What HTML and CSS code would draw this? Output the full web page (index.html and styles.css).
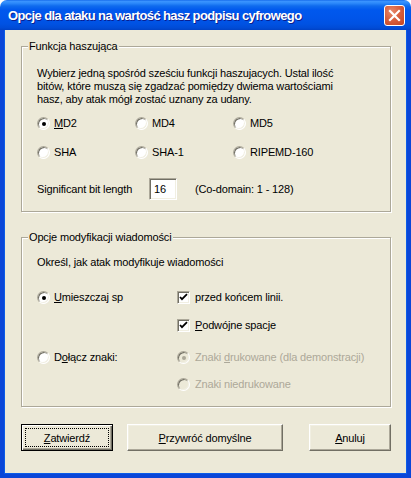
FILE: index.html
```html
<!DOCTYPE html>
<html lang="pl">
<head>
<meta charset="utf-8">
<title>Opcje dla ataku na wartość hasz podpisu cyfrowego</title>
<link rel="stylesheet" href="styles.css">
</head>
<body>
<div class="window">
  <div class="titlebar">
    <span class="title">Opcje dla ataku na wartość hasz podpisu cyfrowego</span>
    <span class="close"><svg width="21" height="21" viewBox="0 0 21 21"><path d="M6 6 L15 15 M15 6 L6 15" stroke="#fff" stroke-width="2.2" stroke-linecap="square"/></svg></span>
  </div>
  <div class="client">
    <fieldset class="group g1">
      <legend>Funkcja haszująca</legend>
      <p class="desc">Wybierz jedną spośród sześciu funkcji haszujacych. Ustal ilość<br>bitów, które muszą się zgadzać pomiędzy dwiema wartościami<br>hasz, aby atak mógł zostać uznany za udany.</p>
      <div class="algos">
        <label class="opt"><span class="radio on"></span><span><u>M</u>D2</span></label>
        <label class="opt"><span class="radio"></span><span>MD4</span></label>
        <label class="opt"><span class="radio"></span><span>MD5</span></label>
        <label class="opt"><span class="radio"></span><span>SHA</span></label>
        <label class="opt"><span class="radio"></span><span>SHA-1</span></label>
        <label class="opt"><span class="radio"></span><span>RIPEMD-160</span></label>
      </div>
      <div class="bitrow">
        <span class="bitlabel">Significant bit length</span>
        <span class="edit">16</span>
        <span class="domain">(Co-domain: 1 - 128)</span>
      </div>
    </fieldset>

    <fieldset class="group g2">
      <legend>Opcje modyfikacji wiadomości</legend>
      <p class="desc2">Określ, jak atak modyfikuje wiadomości</p>
      <div class="mods">
        <label class="opt r1 c1"><span class="radio on"></span><span><u>U</u>mieszczaj sp</span></label>
        <label class="opt r1 c2 wide"><span class="check on"><svg width="11" height="11" viewBox="0 0 11 11"><path d="M2 5 L4 7.2 L9 2.2" fill="none" stroke="#000" stroke-width="1.8"/></svg></span><span>przed końcem linii.</span></label>
        <label class="opt r2 c2 wide"><span class="check on"><svg width="11" height="11" viewBox="0 0 11 11"><path d="M2 5 L4 7.2 L9 2.2" fill="none" stroke="#000" stroke-width="1.8"/></svg></span><span><u>P</u>odwójne spacje</span></label>
        <label class="opt r3 c1"><span class="radio"></span><span>D<u>o</u>łącz znaki:</span></label>
        <label class="opt r3 c2 wide dis"><span class="radio on"></span><span>Znaki <u>d</u>rukowane (dla demonstracji)</span></label>
        <label class="opt r4 c2 wide dis"><span class="radio"></span><span>Znaki niedrukowane</span></label>
      </div>
    </fieldset>

    <div class="buttons">
      <button class="btn default ok"><span class="focus"><u>Z</u>atwierdź</span></button>
      <button class="btn reset"><u>P</u>rzywróć domyślne</button>
      <button class="btn cancel"><u>A</u>nuluj</button>
    </div>
  </div>
</div>
</body>
</html>
```
FILE: styles.css
```css
* { box-sizing: border-box; }
html, body { margin: 0; padding: 0; background: #fff; }
body {
  font-family: "Liberation Sans", Arial, sans-serif;
  font-size: 11px;
  line-height: 13px;
  letter-spacing: -0.15px;
  color: #000;
}
.window {
  width: 411px;
  height: 478px;
  display: flex;
  flex-direction: column;
}
.titlebar {
  flex: none;
  height: 30px;
  border-radius: 7px 7px 0 0;
  background: linear-gradient(to bottom,
    #0A5FE5 0, #3D95FF 1px, #2E8BFB 3px, #0F6BEE 6px, #0058EE 10px,
    #0055EA 18px, #0052E2 24px, #004BD6 28px, #0042C5 30px);
  display: flex;
  align-items: center;
  padding: 0 6px 0 8px;
}
.title {
  flex: 1;
  color: #fff;
  font-family: "Liberation Sans", Arial, sans-serif;
  font-weight: bold;
  font-size: 13px;
  letter-spacing: -0.6px;
  text-shadow: 1px 1px 0 #0A1E8F;
  white-space: nowrap;
  padding-top: 1px;
}
.close {
  width: 21px;
  height: 21px;
  border: 1px solid #fff;
  border-radius: 3px;
  background: radial-gradient(circle at 35% 30%, #E8896B 0, #D8603F 45%, #C2431F 100%);
  display: flex;
  align-items: center;
  justify-content: center;
  margin-top: 1px;
}
.close svg { display: block; margin: -1px; }
.client {
  flex: 1;
  background: #ECE9D8;
  border-style: solid;
  border-color: #0A46D8;
  border-width: 0 4px 4px 4px;
  box-shadow: inset 1px 0 0 #0B5CE8, inset -1px 0 0 #0B5CE8, inset 0 -1px 0 #0B5CE8;
  display: flex;
  flex-direction: column;
}
.group {
  margin: 0 16px 0 17px;
  padding: 0 0 0 15px;
  border: 1px solid #ACA899;
  box-shadow: inset 1px 1px 0 #fff, 1px 1px 0 #fff;
  min-width: 0;
}
.group legend {
  margin-left: -9px;
  padding: 0 1px;
  background: #ECE9D8;
  line-height: 13px;
}
.g1 { margin-top: 10px; padding-bottom: 11px; }
.g2 { margin-top: 19px; padding-bottom: 15px; }

.desc { margin: 14px 0 0 0; white-space: nowrap; }
.algos {
  margin-top: 11px;
  display: grid;
  grid-template-columns: 98px 98px 1fr;
  row-gap: 16px;
}
.opt {
  display: flex;
  align-items: center;
  gap: 4px;
  height: 13px;
  white-space: nowrap;
}
.radio {
  flex: none;
  width: 13px;
  height: 13px;
  border-radius: 50%;
  background: #fff;
  border: 1px solid;
  border-color: #ACA899 #fff #fff #ACA899;
  box-shadow: inset 1px 1px 0 #716F64, inset -1px -1px 0 #F1EFE2;
  display: flex;
  align-items: center;
  justify-content: center;
}
.radio.on::after {
  content: "";
  width: 4px;
  height: 4px;
  border-radius: 50%;
  background: #000;
}
.check {
  flex: none;
  width: 13px;
  height: 13px;
  background: #fff;
  border: 1px solid;
  border-color: #ACA899 #fff #fff #ACA899;
  box-shadow: inset 1px 1px 0 #716F64, inset -1px -1px 0 #F1EFE2;
  display: flex;
  align-items: center;
  justify-content: center;
}
.check svg { display: block; }
.wide { gap: 5px; }
.dis { color: #ACA899; }
.dis .radio { background: #ECE9D8; }
.dis .radio.on::after { background: #ACA899; }

.bitrow {
  margin-top: 19px;
  display: flex;
  align-items: center;
  height: 22px;
}
.bitlabel { width: 112px; }
.edit {
  width: 28px;
  height: 22px;
  background: #fff;
  border: 1px solid;
  border-color: #ACA899 #fff #fff #ACA899;
  box-shadow: inset 1px 1px 0 #716F64, inset -1px -1px 0 #F1EFE2;
  padding: 4px 0 0 4px;
}
.domain { margin-left: 18px; }

.desc2 { margin: 12px 0 0 0; }
.mods {
  margin-top: 22px;
  display: grid;
  grid-template-columns: 140px 1fr;
  grid-template-rows: 13px 15px 13px 19px 13px 14px 13px;
}
.r1 { grid-row: 1; }
.r2 { grid-row: 3; }
.r3 { grid-row: 5; }
.r4 { grid-row: 7; }
.c1 { grid-column: 1; }
.c2 { grid-column: 2; }

.buttons {
  margin: 17px 0 0 17px;
  display: flex;
  align-items: flex-start;
}
.btn {
  height: 27px;
  font-family: "Liberation Sans", Arial, sans-serif;
  font-size: 11px;
  letter-spacing: -0.15px;
  color: #000;
  background: #ECE9D8;
  border: 1px solid;
  border-color: #fff #716F64 #716F64 #fff;
  box-shadow: inset -1px -1px 0 #ACA899, inset 1px 1px 0 #F1EFE2;
  padding: 0;
  display: flex;
  align-items: center;
  justify-content: center;
}
.btn.default {
  border: 1px solid #000;
  box-shadow: inset 1px 1px 0 #fff, inset -1px -1px 0 #716F64, inset -2px -2px 0 #ACA899;
  padding: 3px;
}
.focus {
  width: 100%;
  height: 100%;
  border: 1px dotted #000;
  display: flex;
  align-items: center;
  justify-content: center;
}
.ok { width: 92px; }
.reset { width: 156px; margin-left: 14px; }
.cancel { width: 82px; margin-left: 26px; }
```
